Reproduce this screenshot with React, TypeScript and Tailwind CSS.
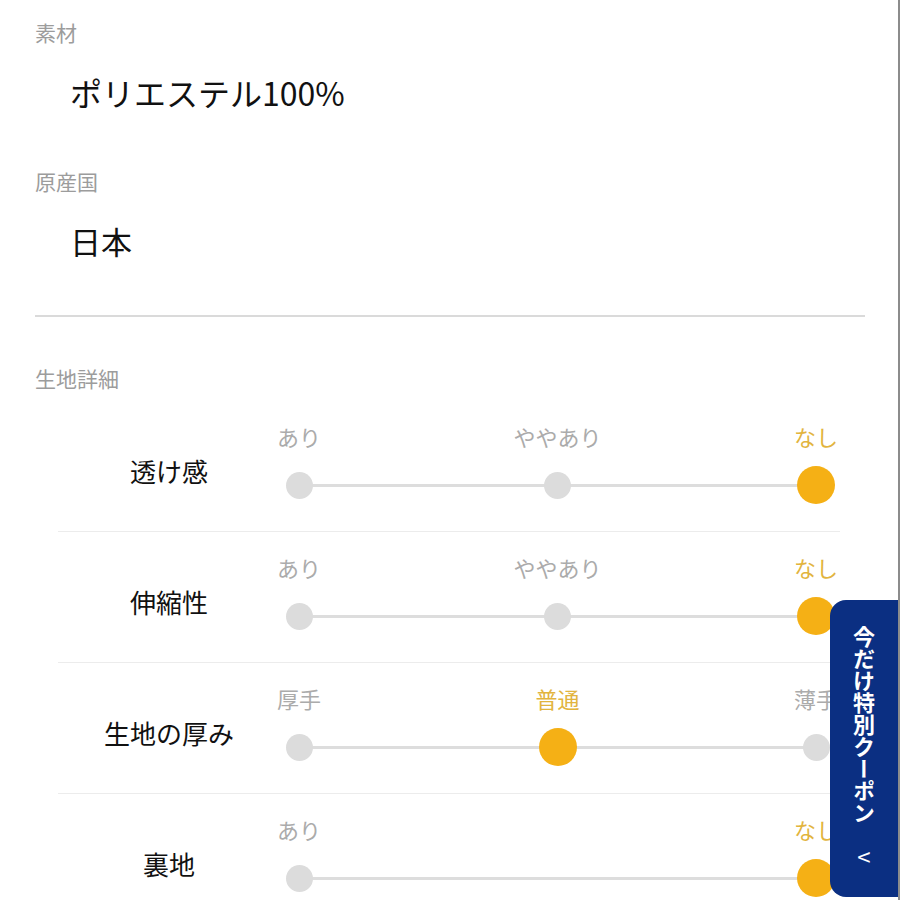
import React from 'react';

type Point = { label: string; active?: boolean } | null;

interface DetailRow {
  name: string;
  points: Point[];
}

const ROWS: DetailRow[] = [
  { name: '透け感', points: [{ label: 'あり' }, { label: 'ややあり' }, { label: 'なし', active: true }] },
  { name: '伸縮性', points: [{ label: 'あり' }, { label: 'ややあり' }, { label: 'なし', active: true }] },
  { name: '生地の厚み', points: [{ label: '厚手' }, { label: '普通', active: true }, { label: '薄手' }] },
  { name: '裏地', points: [{ label: 'あり' }, null, { label: 'なし', active: true }] },
];

const FONT = { fontFamily: '"Noto Sans CJK JP", "Noto Sans", sans-serif' };

function Slider({ points }: { points: Point[] }) {
  return (
    <div className="w-[555px]">
      <div className="flex justify-between">
        {points.map((p, i) => (
          <div key={i} className="flex w-[38px] justify-center">
            <span
              className={`whitespace-nowrap text-[22px] leading-[30px] ${
                p?.active ? 'text-[#e2b43e]' : 'text-[#ababab]'
              }`}
            >
              {p?.label ?? ''}
            </span>
          </div>
        ))}
      </div>
      {/* track line drawn as background between first and last dot centres */}
      <div className="mt-[14px] flex h-[40px] items-center justify-between bg-[linear-gradient(#dddddd,#dddddd)] bg-[length:calc(100%-38px)_3px] bg-center bg-no-repeat">
        {points.map((p, i) => (
          <div key={i} className="flex w-[38px] justify-center">
            {p &&
              (p.active ? (
                <div className="h-[38px] w-[38px] rounded-full bg-[#f5b015]" />
              ) : (
                <div className="h-[27px] w-[27px] rounded-full bg-[#dcdcdc]" />
              ))}
          </div>
        ))}
      </div>
    </div>
  );
}

export default function App() {
  return (
    <div
      className="relative h-[900px] w-[900px] overflow-hidden border-r-2 border-[#8c8c8c] bg-white text-[#111]"
      style={FONT}
    >
      <div className="px-[35px] pt-[17px]">
        <div className="text-[21px] leading-[30px] text-[#9c9c9c]">素材</div>
        <div className="mt-[25px] pl-[35px] text-[32px] leading-[40px]">ポリエステル100%</div>
        <div className="mt-[54px] text-[21px] leading-[30px] text-[#9c9c9c]">原産国</div>
        <div className="mt-[25px] pl-[35px] text-[31px] leading-[40px]">日本</div>
      </div>

      <div className="ml-[35px] mr-[33px] mt-[54px] h-[2px] bg-[#dadada]" />

      <div className="px-[35px] pt-[46px]">
        <div className="text-[21px] leading-[30px] text-[#9c9c9c]">生地詳細</div>
      </div>

      <div className="ml-[58px] mr-[58px] pt-[8px]">
        {ROWS.map((row, i) => (
          <div
            key={row.name}
            className={`flex pt-[20px] pb-[26px] ${i < ROWS.length - 1 ? 'border-b border-[#ececec]' : ''}`}
          >
            <div className="w-[222px] shrink-0 pt-[32px] text-center text-[26px] leading-[36px]">
              {row.name}
            </div>
            <Slider points={row.points} />
          </div>
        ))}
      </div>

      <div className="absolute right-0 top-[600px] flex h-[297px] w-[68px] flex-col items-center rounded-l-[16px] bg-[#0b2f82] pt-[26px] text-white">
        <div className="text-[22px] font-bold leading-[24px] [writing-mode:vertical-rl]">
          今だけ特別クーポン
        </div>
        <div className="mt-[18px] text-[24px] leading-[28px]">&lt;</div>
      </div>
    </div>
  );
}
